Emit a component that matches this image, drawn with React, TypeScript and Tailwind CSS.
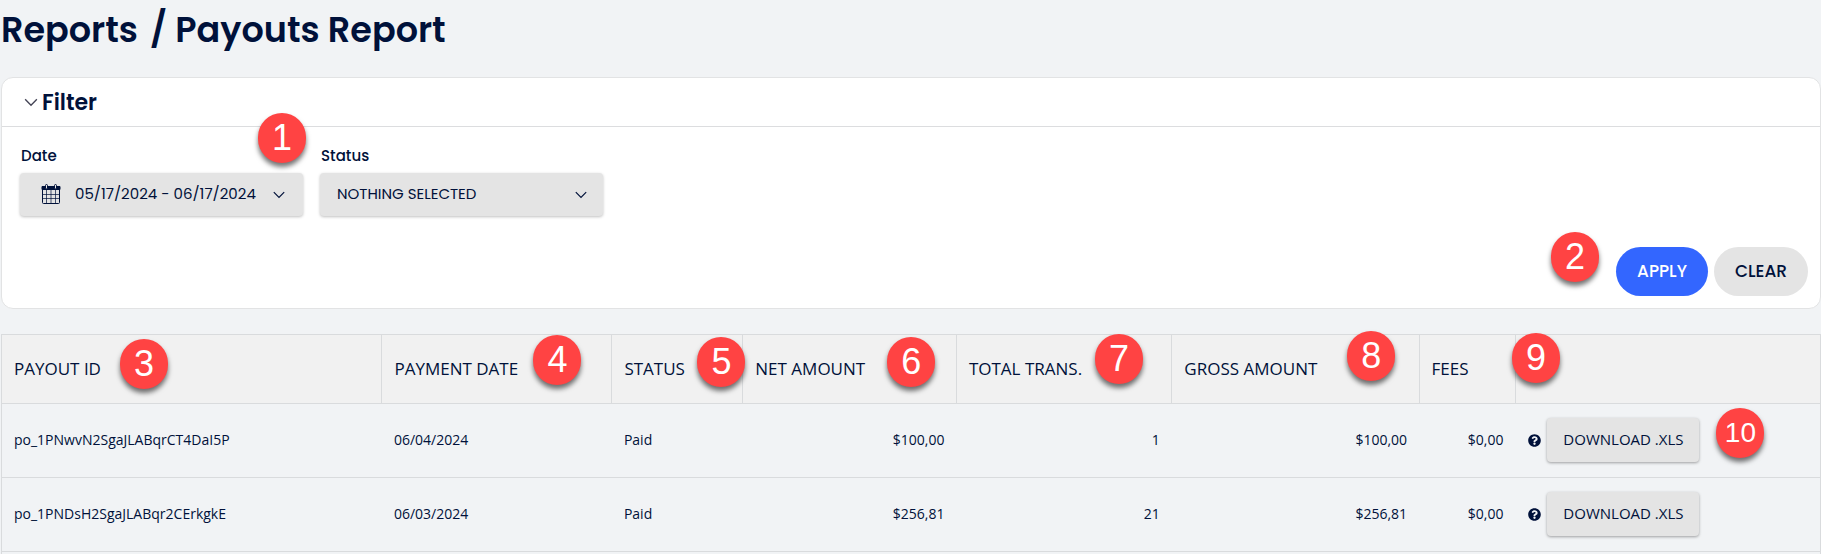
import React, { useState } from "react";
import { FaQuestionCircle } from "react-icons/fa";

interface Payout {
  id: string;
  date: string;
  status: string;
  net: string;
  transactions: number;
  gross: string;
  fees: string;
  marker?: number;
}

const payouts: Payout[] = [
  {
    id: "po_1PNwvN2SgaJLABqrCT4DaI5P",
    date: "06/04/2024",
    status: "Paid",
    net: "$100,00",
    transactions: 1,
    gross: "$100,00",
    fees: "$0,00",
    marker: 10,
  },
  {
    id: "po_1PNDsH2SgaJLABqr2CErkgkE",
    date: "06/03/2024",
    status: "Paid",
    net: "$256,81",
    transactions: 21,
    gross: "$256,81",
    fees: "$0,00",
  },
];

const columns = [
  { label: "PAYOUT ID", width: "w-[20.9%]", marker: 3, place: "left-[118px] top-1" },
  { label: "PAYMENT DATE", width: "w-[12.65%]", marker: 4, place: "left-[151px] top-0" },
  { label: "STATUS", width: "w-[7.2%]", marker: 5, place: "left-[85px] top-0.5" },
  { label: "NET AMOUNT", width: "w-[11.75%]", marker: 6, place: "left-[144px] top-0.5" },
  { label: "TOTAL TRANS.", width: "w-[11.85%]", marker: 7, place: "left-[138px] -top-px" },
  { label: "GROSS AMOUNT", width: "w-[13.6%]", marker: 8, place: "left-[175px] -top-1" },
  { label: "FEES", width: "w-[5.3%]" },
  { label: "", width: "", marker: 9, place: "-left-1 -top-0.5" },
];

const Marker = ({ value, className }: { value: number; className?: string }) => (
  <span
    className={`absolute z-10 flex h-[50px] w-12 items-center justify-center rounded-full bg-[#ff4343] font-['Liberation_Sans',sans-serif] font-normal leading-none text-white shadow-[0_4px_5px_rgba(0,0,0,0.55)] ${
      value > 9 ? "text-[28px]" : "text-4xl"
    } ${className}`}
  >
    {value}
  </span>
);

const Chevron = ({ className }: { className?: string }) => (
  <svg viewBox="0 0 12 8" fill="none" stroke="currentColor" className={className}>
    <path d="M0.8 1.2 6 6.4l5.2-5.2" strokeWidth="1.2" />
  </svg>
);

const CalendarIcon = () => (
  <svg viewBox="0 0 20 21" className="h-[21px] w-5 shrink-0" fill="none" stroke="currentColor">
    <path d="M1 2.5h18V5.500H1z" fill="currentColor" />
    <path d="M1.5 3v15.500a1 1 0 0 0 1 1h15a1 1 0 0 0 1-1V3" />
    <path d="M1 10.500h18M1 14.500h18M5.500 6v13.500M10 6v13.500M14.500 6v13.500" strokeWidth="0.7" />
    <rect x="4.5" y="0.500" width="2" height="4.500" rx="1" fill="#e4e4e4" />
    <rect x="13.500" y="0.500" width="2" height="4.500" rx="1" fill="#e4e4e4" />
  </svg>
);

const Filter = () => {
  const [open, setOpen] = useState(true);

  return (
    <section className="rounded-xl border border-[#e2e3e4] bg-white">
      <h2 className={open ? "border-b border-[#dcdddf]" : ""}>
        <button
          type="button"
          onClick={() => setOpen(!open)}
          className="flex h-12 items-center gap-1 px-[22px] text-[22px] font-semibold"
        >
          <Chevron className="h-[9px] w-3.5 text-[#445]" />
          Filter
        </button>
      </h2>

      {open && (
        <form className="px-3 pb-3 pt-4" onSubmit={(e) => e.preventDefault()}>
          <div className="flex flex-wrap gap-[17px] pl-1.5">
            <div className="relative flex w-[283px] flex-col gap-1">
              <label htmlFor="date" className="pl-px text-[15px] font-medium leading-[26px]">
                Date
              </label>
              <button
                id="date"
                type="button"
                className="flex h-[43px] items-center rounded bg-[#e4e4e4] pl-[21px] text-[15px] shadow-[0_1px_3px_rgba(0,0,0,0.25)]"
              >
                <CalendarIcon />
                <span className="ml-3.5 w-[188px] whitespace-nowrap text-left">
                  05/17/2024 - 06/17/2024
                </span>
                <Chevron className="ml-2.5 h-2 w-3" />
              </button>
              <Marker value={1} className="-top-[30px] left-[238px]" />
            </div>

            <div className="flex w-[283px] flex-col gap-1">
              <label htmlFor="status" className="pl-px text-[15px] font-medium leading-[26px]">
                Status
              </label>
              <div className="relative">
                <select
                  id="status"
                  className="block h-[43px] w-full appearance-none rounded bg-[#e4e4e4] px-[17px] text-[15px] shadow-[0_1px_3px_rgba(0,0,0,0.25)] outline-none"
                >
                  <option>NOTHING SELECTED</option>
                </select>
                <Chevron className="pointer-events-none absolute right-4 top-[18px] h-2 w-3" />
              </div>
            </div>
          </div>

          <div className="mt-[31px] flex justify-end">
            <div className="relative flex gap-1.5">
              <Marker value={2} className="-left-[65px] -top-[15px]" />
              <button
                type="submit"
                className="h-[49px] w-[92px] rounded-full bg-[#3366ff] text-[17px] font-medium text-white"
              >
                APPLY
              </button>
              <button
                type="reset"
                className="h-[49px] w-[94px] rounded-full bg-[#e4e4e4] text-[17px] font-medium"
              >
                CLEAR
              </button>
            </div>
          </div>
        </form>
      )}
    </section>
  );
};

const PayoutsTable = () => (
  <div className="mt-[25px] flex-1 border-x border-t border-[#d9dbdd] font-['Segoe_UI','Open_Sans','Noto_Sans',sans-serif]">
    <table className="w-full table-fixed border-collapse">
      <thead>
        <tr className="h-[68px] border-b border-[#d9dbdd] bg-[#f1f1f1]">
          {columns.map((col, index) => (
            <th
              key={index}
              className={`relative whitespace-nowrap border-r border-[#d9dbdd] px-3 text-left text-[17px] font-medium last:border-r-0 ${col.width}`}
            >
              {col.label}
              {col.marker && <Marker value={col.marker} className={col.place} />}
            </th>
          ))}
        </tr>
      </thead>
      <tbody className="text-sm">
        {payouts.map((payout) => (
          <tr key={payout.id} className="h-[74px] border-b border-[#d9dbdd]">
            <td className="px-3">{payout.id}</td>
            <td className="px-3">{payout.date}</td>
            <td className="px-3">{payout.status}</td>
            <td className="px-3 text-right">{payout.net}</td>
            <td className="px-3 text-right">{payout.transactions}</td>
            <td className="px-3 text-right">{payout.gross}</td>
            <td className="px-3 text-right">{payout.fees}</td>
            <td className="px-[13px]">
              <div className="relative flex items-center gap-1.5">
                <FaQuestionCircle size={13} />
                <button
                  type="button"
                  className="h-11 w-[152px] rounded-sm bg-[#e4e4e4] text-[15px] font-medium shadow-[0_1px_3px_rgba(0,0,0,0.35)]"
                >
                  DOWNLOAD .XLS
                </button>
                {payout.marker && (
                  <Marker value={payout.marker} className="-top-2.5 left-[188px]" />
                )}
              </div>
            </td>
          </tr>
        ))}
      </tbody>
    </table>
  </div>
);

const App = () => (
  <main className="flex min-h-screen flex-col bg-[#f1f3f5] pl-px font-['Poppins','Inter',sans-serif] text-[#00113a]">
    <h1 className="mb-4 flex h-[61px] gap-3 text-[35px] font-semibold leading-[60px]">
      <a href="#reports">Reports</a>
      <span>/ Payouts Report</span>
    </h1>
    <Filter />
    <PayoutsTable />
  </main>
);

export default App;
